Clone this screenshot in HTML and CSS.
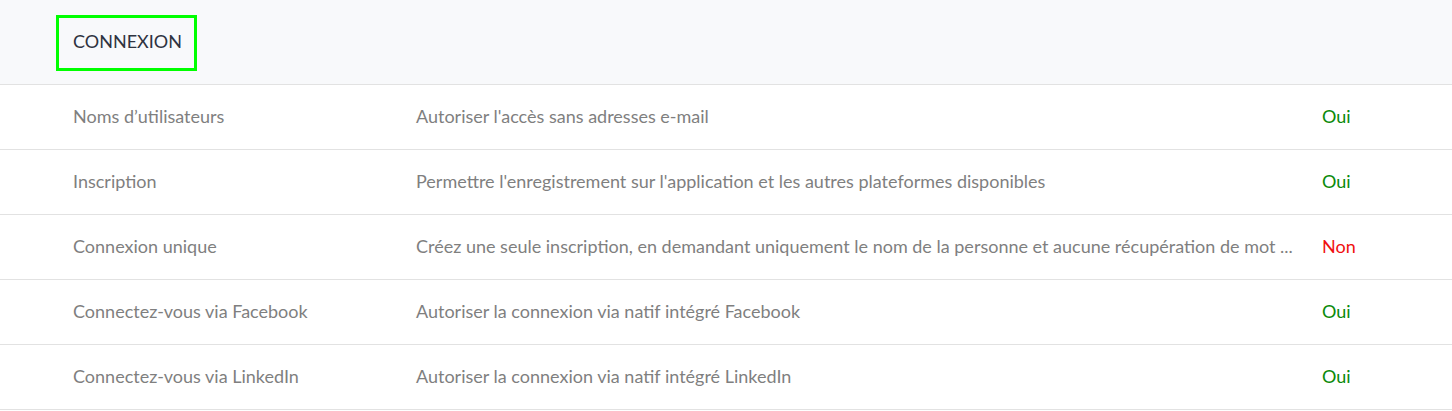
FILE: index.html
```html
<!DOCTYPE html>
<html>
<head>
<link rel="stylesheet" href="styles.css">
</head>
<body>
<div class="section-head">
  <div class="section-title">CONNEXION</div>
</div>
<div class="settings">
  <div class="row">
    <span class="name">Noms d’utilisateurs</span>
    <span class="desc">Autoriser l'accès sans adresses e-mail</span>
    <span class="value yes">Oui</span>
  </div>
  <div class="row">
    <span class="name">Inscription</span>
    <span class="desc">Permettre l'enregistrement sur l'application et les autres plateformes disponibles</span>
    <span class="value yes">Oui</span>
  </div>
  <div class="row">
    <span class="name">Connexion unique</span>
    <span class="desc">Créez une seule inscription, en demandant uniquement le nom de la personne et aucune récupération de mot ...</span>
    <span class="value no">Non</span>
  </div>
  <div class="row">
    <span class="name">Connectez-vous via Facebook</span>
    <span class="desc">Autoriser la connexion via natif intégré Facebook</span>
    <span class="value yes">Oui</span>
  </div>
  <div class="row">
    <span class="name">Connectez-vous via LinkedIn</span>
    <span class="desc">Autoriser la connexion via natif intégré LinkedIn</span>
    <span class="value yes">Oui</span>
  </div>
</div>
</body>
</html>
```

FILE: styles.css
```css
body {
  margin: 0;
  background: #fff;
  font-family: Lato, "Open Sans", sans-serif;
  font-size: 18px;
}
.section-head {
  height: 85px;
  background: #f8f9fb;
  border-bottom: 1px solid #e2e2e2;
  padding: 15px 0 0 56px;
  box-sizing: border-box;
}
.section-title {
  width: 141px;
  height: 56px;
  box-sizing: border-box;
  border: 3px solid #00ff00;
  padding: 0 0 5px 14px;
  display: flex;
  align-items: center;
  color: #2e3340;
}
.row {
  display: grid;
  grid-template-columns: 343px 906px 1fr;
  align-items: center;
  height: 65px;
  box-sizing: border-box;
  padding: 0 0 3px 73px;
  border-bottom: 1px solid #e2e2e2;
  color: #7f7f7f;
}
.desc {
  white-space: nowrap;
}
.yes {
  color: #0a8a0a;
}
.no {
  color: #f01010;
}
```
